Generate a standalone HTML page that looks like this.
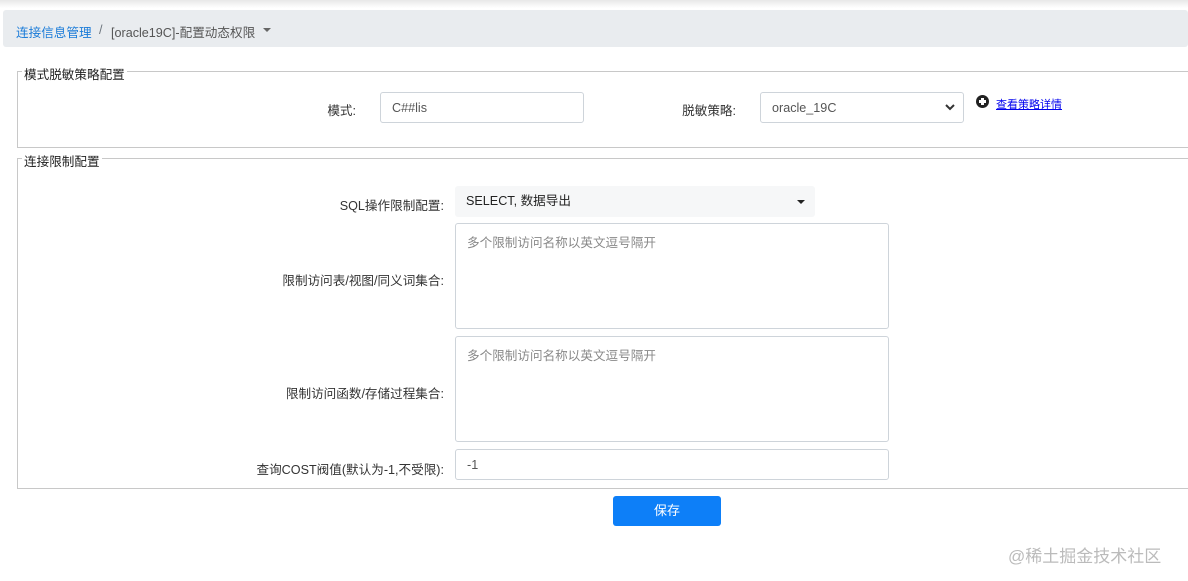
<!DOCTYPE html>
<html><head><meta charset="utf-8"><style>
*{box-sizing:border-box;margin:0;padding:0}
body{width:1188px;height:581px;background:#fff;position:relative;overflow:hidden;font-family:"Liberation Sans","Noto Sans CJK SC",sans-serif;font-size:12.6px;color:#333}
.a{position:absolute}
.top{left:0;top:0;width:1188px;height:8px;background:linear-gradient(#e8e8e8,#fff)}
.bc{left:3px;top:10px;width:1185px;height:37px;background:#e9ecef;border-radius:3px}
.fs{border:1px solid #c8c8c8;border-right:none}
.lg{background:#fff;padding:0 2px;color:#222}
.lbl{text-align:right;color:#333}
.inp{border:1px solid #ced4da;border-radius:3px;background:#fff;padding-left:11px;color:#555}
.ph{color:#888}
</style></head><body>
<div class="a top"></div>
<div class="a bc"></div>
<div class="a" style="left:16px;top:22px;color:#1a7bd8">连接信息管理</div>
<div class="a" style="left:99px;top:23px;color:#6c757d">/</div>
<div class="a" style="left:111px;top:22px;color:#555">[oracle19C]-配置动态权限</div>
<div class="a" style="left:263px;top:28px;width:0;height:0;border-left:4px solid transparent;border-right:4px solid transparent;border-top:4px solid #666"></div>

<div class="a fs" style="left:17px;top:71px;width:1180px;height:77px"></div>
<div class="a lg" style="left:22px;top:64px">模式脱敏策略配置</div>
<div class="a lbl" style="left:300px;top:100px;width:56px">模式:</div>
<div class="a inp" style="left:380px;top:92px;width:204px;height:31px;line-height:30px">C##lis</div>
<div class="a lbl" style="left:660px;top:100px;width:76px">脱敏策略:</div>
<div class="a inp" style="left:760px;top:92px;width:204px;height:31px;line-height:30px">oracle_19C</div>
<svg class="a" style="left:945px;top:104px" width="10" height="7"><path d="M1 1l4 4 4-4" stroke="#333" stroke-width="2" fill="none"/></svg>
<div class="a" style="left:976px;top:95px;width:13px;height:13px;border-radius:50%;background:#222"></div>
<div class="a" style="left:979px;top:100px;width:7px;height:3px;background:#fff"></div>
<div class="a" style="left:981px;top:98px;width:3px;height:7px;background:#fff"></div>
<div class="a" style="left:996px;top:96px;font-size:11px;color:#0000ee;text-decoration:underline">查看策略详情</div>

<div class="a fs" style="left:17px;top:158px;width:1180px;height:331px"></div>
<div class="a lg" style="left:22px;top:151px">连接限制配置</div>
<div class="a lbl" style="left:240px;top:195px;width:204px">SQL操作限制配置:</div>
<div class="a" style="left:455px;top:186px;width:360px;height:31px;background:#f6f7f8;border-radius:3px;line-height:31px;padding-left:11px;color:#222">SELECT, 数据导出</div>
<div class="a" style="left:797px;top:200px;width:0;height:0;border-left:4px solid transparent;border-right:4px solid transparent;border-top:4px solid #222"></div>
<div class="a lbl" style="left:200px;top:270px;width:244px">限制访问表/视图/同义词集合:</div>
<div class="a inp" style="left:455px;top:223px;width:434px;height:106px;padding-top:8px"><span class="ph">多个限制访问名称以英文逗号隔开</span></div>
<div class="a lbl" style="left:200px;top:383px;width:244px">限制访问函数/存储过程集合:</div>
<div class="a inp" style="left:455px;top:336px;width:434px;height:106px;padding-top:8px"><span class="ph">多个限制访问名称以英文逗号隔开</span></div>
<div class="a lbl" style="left:200px;top:459px;width:244px">查询COST阀值(默认为-1,不受限):</div>
<div class="a inp" style="left:455px;top:449px;width:434px;height:31px;line-height:30px">-1</div>
<div class="a" style="left:613px;top:496px;width:108px;height:30px;background:#0d7ff8;border-radius:3px;color:#fff;text-align:center;line-height:30px;font-size:13px">保存</div>
<div class="a" style="left:1008px;top:542px;font-size:17px;color:#bbb">@稀土掘金技术社区</div>
</body></html>
